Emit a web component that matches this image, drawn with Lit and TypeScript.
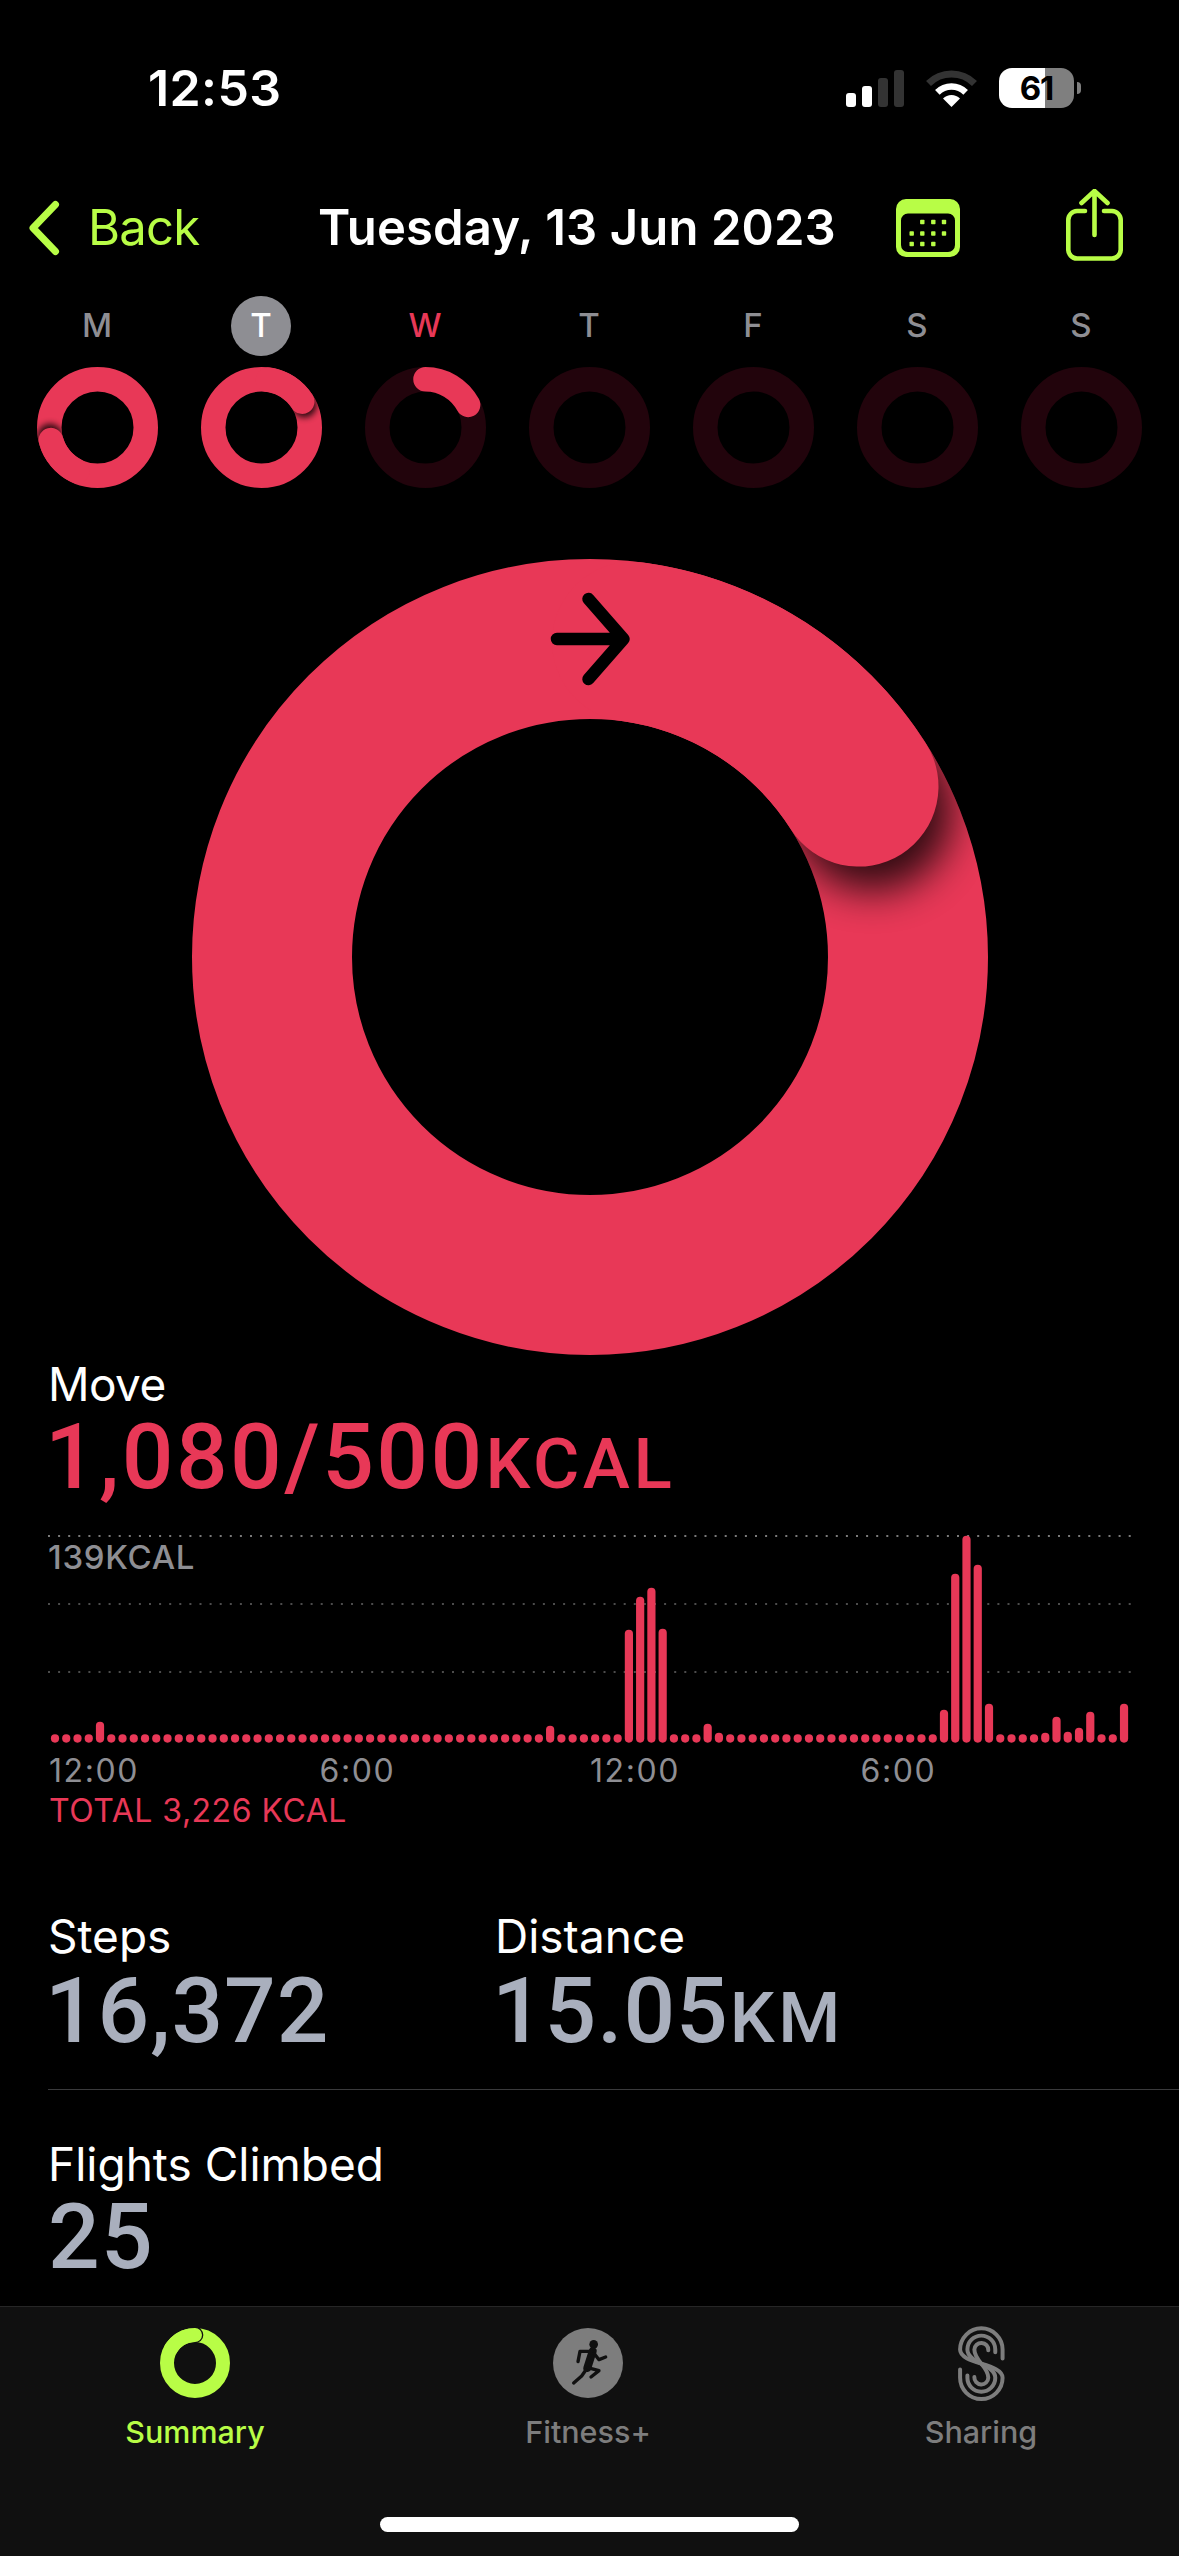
import {LitElement, html, svg, css} from 'lit';
import {customElement} from 'lit/decorators.js';

const RED = '#e83857';
const TRACK = '#22040c';
const LIME = '#b8fd46';

const polar = (r: number, deg: number) => {
  const a = (deg * Math.PI) / 180;
  return {x: r * Math.sin(a), y: -r * Math.cos(a)};
};

// clockwise arc, 0deg is twelve o'clock
const arcPath = (r: number, from: number, to: number) => {
  const a = polar(r, from);
  const b = polar(r, to);
  const large = to - from > 180 ? 1 : 0;
  return `M${a.x} ${a.y}A${r} ${r} 0 ${large} 1 ${b.x} ${b.y}`;
};

let ringId = 0;

function ring(outer: number, width: number, end: number, arrow = false) {
  const r = outer - width / 2;
  const id = `ring${ringId++}`;
  const box = `${-outer} ${-outer} ${outer * 2} ${outer * 2}`;
  const size = outer * 2;
  if (end === 0) {
    return html`<svg width=${size} height=${size} viewBox=${box}>
      <circle r=${r} fill="none" stroke=${TRACK} stroke-width=${width}></circle>
    </svg>`;
  }
  if (end < 360) {
    return html`<svg width=${size} height=${size} viewBox=${box}>
      <circle r=${r} fill="none" stroke=${TRACK} stroke-width=${width}></circle>
      <path d=${arcPath(r, 0, end)} fill="none" stroke=${RED} stroke-width=${width} stroke-linecap="round"></path>
    </svg>`;
  }
  const deg = end - 360;
  const sh = polar(r, deg + 5);
  return html`<svg width=${size} height=${size} viewBox=${box}>
    <defs>
      <mask id="${id}m" maskUnits="userSpaceOnUse" x=${-outer} y=${-outer} width=${size} height=${size}>
        <circle r=${r} fill="none" stroke="#fff" stroke-width=${width}></circle>
      </mask>
      <filter id="${id}b" x="-60%" y="-60%" width="220%" height="220%">
        <feGaussianBlur stdDeviation=${width * 0.125}></feGaussianBlur>
      </filter>
    </defs>
    <circle r=${r} fill="none" stroke=${RED} stroke-width=${width}></circle>
    <g mask="url(#${id}m)">
      <circle cx=${sh.x} cy=${sh.y} r=${width / 2} fill="#000" opacity="0.8" filter="url(#${id}b)"></circle>
    </g>
    <path d=${arcPath(r, deg - 50, deg)} fill="none" stroke=${RED} stroke-width=${width} stroke-linecap="round"></path>
    ${arrow
      ? svg`<path d="M-33 ${-r}H30M-1.5 ${-r - 40}L33.5 ${-r}L-1.5 ${-r + 40}" fill="none" stroke="#000" stroke-width="12.5" stroke-linecap="round" stroke-linejoin="round"></path>`
      : ''}
  </svg>`;
}

const DAYS = [
  {label: 'M', end: 615, cls: ''},
  {label: 'T', end: 417.6, cls: 'today'},
  {label: 'W', end: 62, cls: 'active'},
  {label: 'T', end: 0, cls: ''},
  {label: 'F', end: 0, cls: ''},
  {label: 'S', end: 0, cls: ''},
  {label: 'S', end: 0, cls: ''},
];

// bars that rise above the resting dot, index -> height
const TALL: Record<number, number> = {
  4: 21, 44: 17, 51: 113, 52: 146, 53: 155, 54: 114, 58: 19, 59: 10,
  79: 33, 80: 169, 81: 207, 82: 178, 83: 39, 88: 10, 89: 26, 90: 11,
  91: 15, 92: 31, 95: 39,
};
const BARS = Array.from({length: 96}, (_, i) => TALL[i] ?? 8.5);

@customElement('app-root')
export class AppRoot extends LitElement {
  static styles = css`
    :host {
      display: flex;
      flex-direction: column;
      width: 1179px;
      height: 2556px;
      overflow: hidden;
      background: #000;
      color: #fff;
      font-family: Inter, 'Liberation Sans', sans-serif;
    }
    svg {
      display: block;
      flex: none;
    }

    .status {
      display: flex;
      align-items: center;
      height: 176px;
      flex: none;
      padding: 0 98px 0 148px;
      box-sizing: border-box;
    }
    .time {
      font-size: 50px;
      font-weight: 600;
      letter-spacing: 0.4px;
    }
    .signal {
      margin-left: auto;
    }
    .wifi {
      margin-left: 22px;
    }
    .battery {
      margin-left: 22px;
      width: 75px;
      height: 40px;
      border-radius: 13px;
      background: linear-gradient(90deg, #fff 61%, #7f7f7f 61%);
      color: #000;
      font-size: 33px;
      font-weight: 700;
      letter-spacing: -1px;
      line-height: 40px;
      text-align: center;
      margin-top: -1px;
    }
    .nub {
      width: 4px;
      height: 12px;
      margin-left: 3px;
      border-radius: 0 6px 6px 0;
      background: #7f7f7f;
    }

    .nav {
      display: flex;
      align-items: center;
      height: 104px;
      flex: none;
      padding-left: 29px;
    }
    .back {
      margin: 0 0 2px 28px;
      width: 111px;
      font-size: 49px;
      letter-spacing: -0.8px;
      color: #b8fd46;
      white-space: nowrap;
    }
    .title {
      margin: 0 0 2px 119px;
      width: 517px;
      font-size: 49px;
      font-weight: 600;
      letter-spacing: 0.1px;
      white-space: nowrap;
    }
    .calendar {
      margin-left: 61px;
    }
    .share {
      margin: 0 0 6px 106px;
    }

    .week {
      display: grid;
      grid-template-columns: repeat(7, 164px);
      padding: 16px 0 0 15px;
      flex: none;
    }
    .day {
      display: flex;
      flex-direction: column;
      align-items: center;
      gap: 11px;
    }
    .letter {
      width: 60px;
      height: 60px;
      box-sizing: border-box;
      padding-bottom: 2px;
      border-radius: 50%;
      display: flex;
      align-items: center;
      justify-content: center;
      font-size: 33px;
      font-weight: 500;
      color: #8e8e93;
    }
    .today .letter {
      background: #8e8e93;
      color: #fff;
    }
    .active .letter {
      color: #e83857;
    }

    .hero {
      display: flex;
      justify-content: center;
      margin-top: 71px;
      flex: none;
    }

    .section {
      padding-left: 48px;
      flex: none;
    }
    .label {
      font-size: 46px;
      line-height: 56px;
      height: 56px;
      letter-spacing: 0;
      white-space: nowrap;
    }
    .value {
      font-family: Roboto, sans-serif;
      font-size: 91px;
      font-weight: 500;
      line-height: 90px;
      height: 90px;
      margin-left: -3px;
      color: #a9afbd;
      letter-spacing: 0.9px;
      white-space: nowrap;
    }
    .value span {
      font-size: 71px;
      line-height: 1;
      margin-left: 1px;
      letter-spacing: 3.6px;
    }
    .value.move {
      color: #e83857;
      letter-spacing: 2.4px;
    }
    .move-block {
      margin-top: 1px;
      letter-spacing: 0;
    }
    .move-block .label {
      letter-spacing: -0.6px;
    }

    .chart {
      position: relative;
      margin: 32px 0 0 48px;
      width: 1131px;
      flex: none;
    }
    .peak {
      position: absolute;
      left: 0;
      top: 3px;
      font-size: 33px;
      line-height: 40px;
      font-weight: 500;
      letter-spacing: 0.7px;
      color: #8e8e93;
    }
    .axis {
      display: grid;
      grid-template-columns: repeat(4, 270.5px);
      margin: 7px 0 0 49px;
      flex: none;
      font-size: 32px;
      line-height: 40px;
      letter-spacing: 1.6px;
      color: #8e8e93;
    }
    .total {
      padding-left: 49px;
      margin-top: 1px;
      font-size: 32px;
      line-height: 38px;
      letter-spacing: 0.5px;
      color: #e83857;
      flex: none;
    }

    .stats {
      display: flex;
      margin-top: 78px;
      padding-left: 48px;
      flex: none;
    }
    .stat {
      width: 447px;
    }
    .stat .value {
      margin-top: 2px;
    }
    .rule {
      margin: 33px 0 0 48px;
      height: 1px;
      background: #3a3a3c;
      flex: none;
    }
    .flights {
      margin-top: 46px;
    }
    .flights .value {
      margin-left: 0;
      letter-spacing: 1.4px;
    }

    .tabbar {
      margin-top: auto;
      height: 250px;
      box-sizing: border-box;
      border-top: 1px solid #262626;
      background: #101010;
      display: flex;
      flex-direction: column;
      align-items: center;
      flex: none;
    }
    .tabs {
      display: grid;
      grid-template-columns: repeat(3, 393px);
      padding: 21px 3px 0 0;
    }
    .tab {
      display: flex;
      flex-direction: column;
      align-items: center;
      font-size: 30.5px;
      line-height: 36px;
      font-weight: 500;
      color: #7d7d7d;
    }
    .tab.on {
      color: #b8fd46;
    }
    .tab-icon {
      height: 70px;
      margin-bottom: 16px;
      display: flex;
      align-items: center;
    }
    .home {
      margin-top: 67px;
      width: 419px;
      height: 15px;
      border-radius: 8px;
      background: #fff;
    }
  `;

  renderWifi() {
    const cx = 25.5;
    const cy = 36.5;
    const arc = (r: number) => {
      const a = polar(r, -45);
      const b = polar(r, 45);
      return `M${cx + a.x} ${cy + a.y}A${r} ${r} 0 0 1 ${cx + b.x} ${cy + b.y}`;
    };
    return html`<svg class="wifi" width="51" height="37" viewBox="0 0 51 37" fill="none">
      <path d=${arc(32.5)} stroke="#333" stroke-width="7"></path>
      <path d=${arc(20)} stroke="#fff" stroke-width="6.5"></path>
      <path d="M25.5 37L17 28.5A12 12 0 0 1 34 28.5Z" fill="#fff"></path>
    </svg>`;
  }

  renderCalendar() {
    const dots = [
      [26.3, 23], [37.3, 23], [48, 23],
      [15.7, 34.5], [26.3, 34.5], [37.3, 34.5], [48, 34.5],
      [15.7, 45], [26.3, 45], [37.3, 45],
    ];
    return html`<svg class="calendar" width="64" height="58" viewBox="0 0 64 58">
      <path
        fill=${LIME}
        fill-rule="evenodd"
        d="M10 0H54A10 10 0 0 1 64 10V48A10 10 0 0 1 54 58H10A10 10 0 0 1 0 48V10A10 10 0 0 1 10 0ZM12 14.5A7 7 0 0 0 5 21.5V46A7 7 0 0 0 12 53H52A7 7 0 0 0 59 46V21.5A7 7 0 0 0 52 14.5Z"
      ></path>
      ${dots.map(
        ([x, y]) => svg`<rect x=${x - 2.2} y=${y - 2.2} width="4.4" height="4.4" rx="0.8" fill=${LIME}></rect>`
      )}
    </svg>`;
  }

  renderChart() {
    const base = 208.7;
    return html`<div class="chart">
      <svg width="1131" height="210" viewBox="0 0 1131 210" fill="none">
        <path d="M0 2H1084" stroke="#7a7a7a" stroke-width="2" stroke-dasharray="2 8.1"></path>
        <path d="M0 70H1084" stroke="#4c4c4c" stroke-width="2" stroke-dasharray="2 8.1"></path>
        <path d="M0 138H1084" stroke="#4c4c4c" stroke-width="2" stroke-dasharray="2 8.1"></path>
        ${BARS.map(
          (h, i) => svg`<rect x=${7 + 11.253 * i - 4.1} y=${base - h} width="8.2" height=${h} rx="4.1" fill=${RED}></rect>`
        )}
      </svg>
      <div class="peak">139KCAL</div>
    </div>`;
  }

  render() {
    return html`
      <div class="status">
        <div class="time">12:53</div>
        <svg class="signal" width="58" height="37" viewBox="0 0 58 37">
          <rect x="0" y="23" width="10" height="14" rx="3" fill="#fff"></rect>
          <rect x="16" y="16" width="10" height="21" rx="3" fill="#fff"></rect>
          <rect x="32" y="8" width="10" height="29" rx="3" fill="#333"></rect>
          <rect x="48" y="0" width="10" height="37" rx="3" fill="#333"></rect>
        </svg>
        ${this.renderWifi()}
        <div class="battery">61</div>
        <div class="nub"></div>
      </div>

      <div class="nav">
        <svg width="31" height="56" viewBox="0 0 31 56" fill="none">
          <path d="M26.5 4.5L4 28L26.5 51.5" stroke=${LIME} stroke-width="7" stroke-linecap="round" stroke-linejoin="round"></path>
        </svg>
        <div class="back">Back</div>
        <div class="title">Tuesday, 13 Jun 2023</div>
        ${this.renderCalendar()}
        <svg class="share" width="57" height="72" viewBox="0 0 57 72" fill="none" stroke=${LIME} stroke-width="4.6" stroke-linecap="round" stroke-linejoin="round">
          <path d="M19 22H11A9 9 0 0 0 2.3 31V60A9 9 0 0 0 11 69.5H46A9 9 0 0 0 54.7 60V31A9 9 0 0 0 46 22H38"></path>
          <path d="M28.5 46V2M15.5 14L28.5 2L41.5 14"></path>
        </svg>
      </div>

      <div class="week">
        ${DAYS.map(
          d => html`<div class="day ${d.cls}">
            <div class="letter">${d.label}</div>
            ${ring(60.5, 24.5, d.end)}
          </div>`
        )}
      </div>

      <div class="hero">${ring(398, 160, 417.6, true)}</div>

      <div class="section move-block">
        <div class="label">Move</div>
        <div class="value move">1,080/500<span>KCAL</span></div>
      </div>

      ${this.renderChart()}

      <div class="axis">
        <div>12:00</div>
        <div>6:00</div>
        <div>12:00</div>
        <div>6:00</div>
      </div>
      <div class="total">TOTAL 3,226 KCAL</div>

      <div class="stats">
        <div class="stat">
          <div class="label">Steps</div>
          <div class="value">16,372</div>
        </div>
        <div class="stat">
          <div class="label">Distance</div>
          <div class="value">15.05<span>KM</span></div>
        </div>
      </div>
      <div class="rule"></div>
      <div class="section flights">
        <div class="label">Flights Climbed</div>
        <div class="value">25</div>
      </div>

      <div class="tabbar">
        <div class="tabs">
          <div class="tab on">
            <div class="tab-icon">
              <svg width="70" height="70" viewBox="-35 -35 70 70" fill="none">
                <circle r="28" stroke=${LIME} stroke-width="14"></circle>
                <circle cx="0" cy="-28" r="8.3" fill="#101010"></circle>
                <path d=${arcPath(28, -60, 0)} stroke=${LIME} stroke-width="14" stroke-linecap="round"></path>
              </svg>
            </div>
            Summary
          </div>
          <div class="tab">
            <div class="tab-icon">
              <svg width="70" height="70" viewBox="38 38 210 210" fill="none">
                <circle cx="143" cy="143" r="105" fill="#7d7d7d"></circle>
                <circle cx="160" cy="87" r="13" fill="#101010"></circle>
                <path d="M157 108L141 158" stroke="#101010" stroke-width="24" stroke-linecap="round"></path>
                <g stroke="#101010" stroke-width="10" stroke-linecap="round" stroke-linejoin="round">
                  <path d="M155 108H119L113 139"></path>
                  <path d="M162 115L176 133L196 125"></path>
                  <path d="M142 157L176 166L152 185"></path>
                  <path d="M136 165L124 182L100 203"></path>
                </g>
              </svg>
            </div>
            Fitness+
          </div>
          <div class="tab">
            <div class="tab-icon">
              <svg width="49" height="77" viewBox="50 26 147 232" fill="none" stroke="#7d7d7d" stroke-width="12" stroke-linecap="round">
                <path d="M187 127V100A64 64 0 0 0 59 100C59 145 187 140 187 185A64 64 0 0 1 59 185V160"></path>
                <path d="M165 108V100A42 42 0 0 0 81 100C81 140 165 145 165 185A42 42 0 0 1 81 185V178"></path>
                <path d="M144 102A21 21 0 0 0 102 100C102 135 144 150 144 185A21 21 0 0 1 102 183"></path>
              </svg>
            </div>
            Sharing
          </div>
        </div>
        <div class="home"></div>
      </div>
    `;
  }
}
